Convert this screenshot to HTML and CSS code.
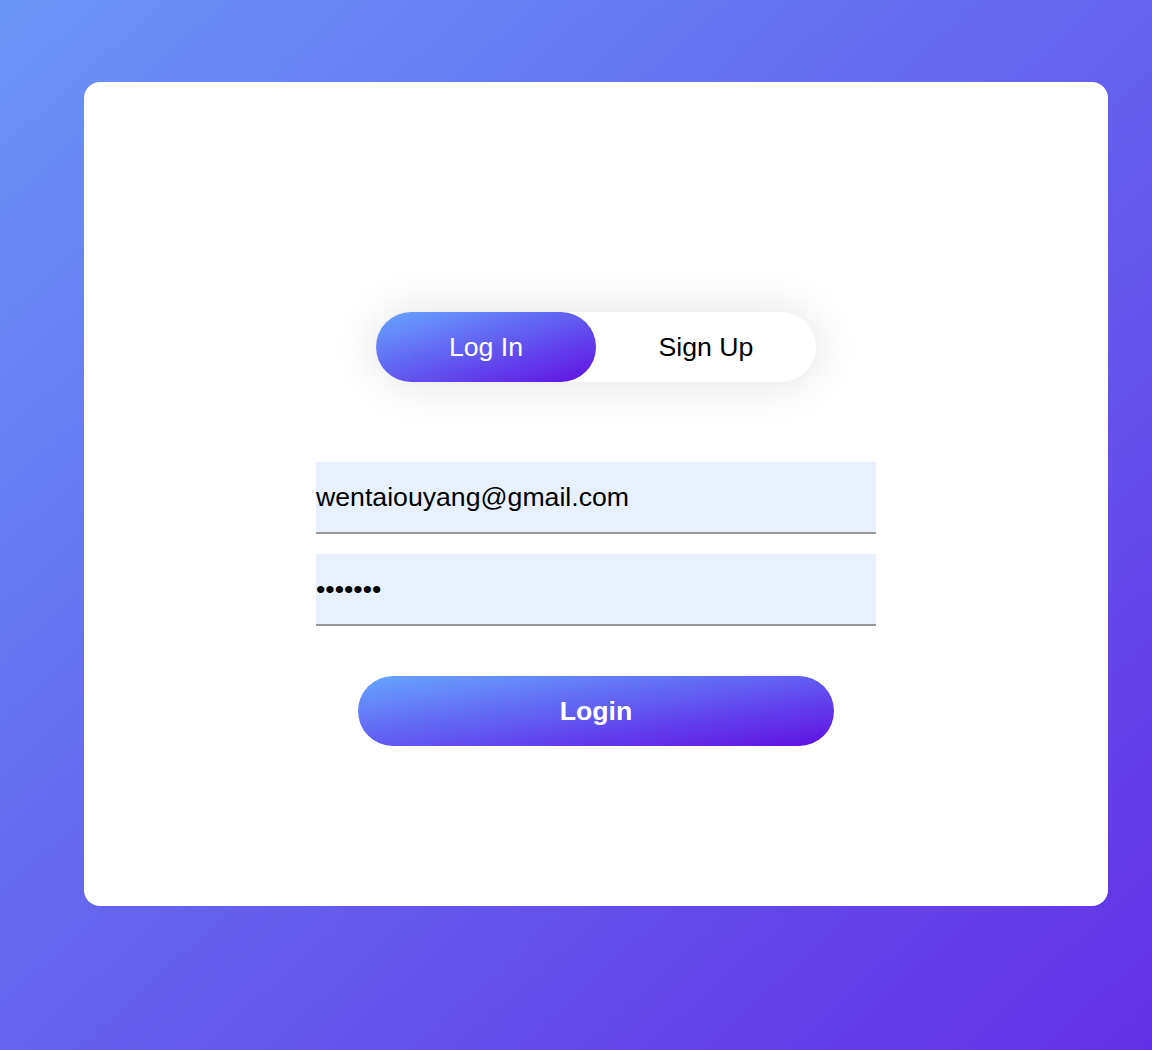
FILE: index.html
```html
<!DOCTYPE html>
<html>
<head>
<meta charset="utf-8">
<link rel="stylesheet" href="styles.css">
</head>
<body>
<div class="page">
  <div class="card">
    <div class="toggle">
      <div class="tab active">Log In</div>
      <div class="tab">Sign Up</div>
    </div>
    <form class="form">
      <input class="field" type="text" value="wentaiouyang@gmail.com">
      <input class="field" type="password" value="1234567">
      <button class="submit" type="button">Login</button>
    </form>
  </div>
</div>
</body>
</html>
```

FILE: styles.css
```css
html, body {
  margin: 0;
  padding: 0;
}
body {
  width: 1152px;
  height: 1050px;
  overflow: hidden;
  background: linear-gradient(to bottom right, #6a95f8, #6230e4);
  font-family: "Liberation Sans", Arial, sans-serif;
}
.page {
  padding: 82px 44px 0 84px;
}
.card {
  width: 1024px;
  height: 824px;
  box-sizing: border-box;
  background: #fff;
  border-radius: 16px;
  padding-top: 230px;
  display: flex;
  flex-direction: column;
  align-items: center;
}
.toggle {
  display: flex;
  width: 440px;
  height: 70px;
  border-radius: 35px;
  background: #fff;
  box-shadow: 0 0 45px rgba(0, 0, 0, 0.12);
}
.tab {
  width: 220px;
  height: 70px;
  border-radius: 35px;
  display: flex;
  align-items: center;
  justify-content: center;
  font-size: 26.67px;
  color: #000;
}
.tab.active {
  color: #fff;
  background: linear-gradient(to bottom right, #66a6ff, #5f10e2);
}
.form {
  margin-top: 80px;
  display: flex;
  flex-direction: column;
  align-items: center;
  width: 560px;
}
.field {
  width: 560px;
  height: 72px;
  box-sizing: border-box;
  margin: 0 0 20px 0;
  padding: 0;
  border: none;
  border-bottom: 2px solid #999;
  background: #e8f0fe;
  font-family: "Liberation Sans", Arial, sans-serif;
  font-size: 26.67px;
  color: #000;
  outline: none;
}
.submit {
  margin-top: 30px;
  width: 476px;
  height: 70px;
  border: none;
  border-radius: 35px;
  background: linear-gradient(to bottom right, #66a6ff, #5f10e2);
  color: #fff;
  font-family: "Liberation Sans", Arial, sans-serif;
  font-weight: bold;
  font-size: 26.67px;
  padding: 0;
}
```
